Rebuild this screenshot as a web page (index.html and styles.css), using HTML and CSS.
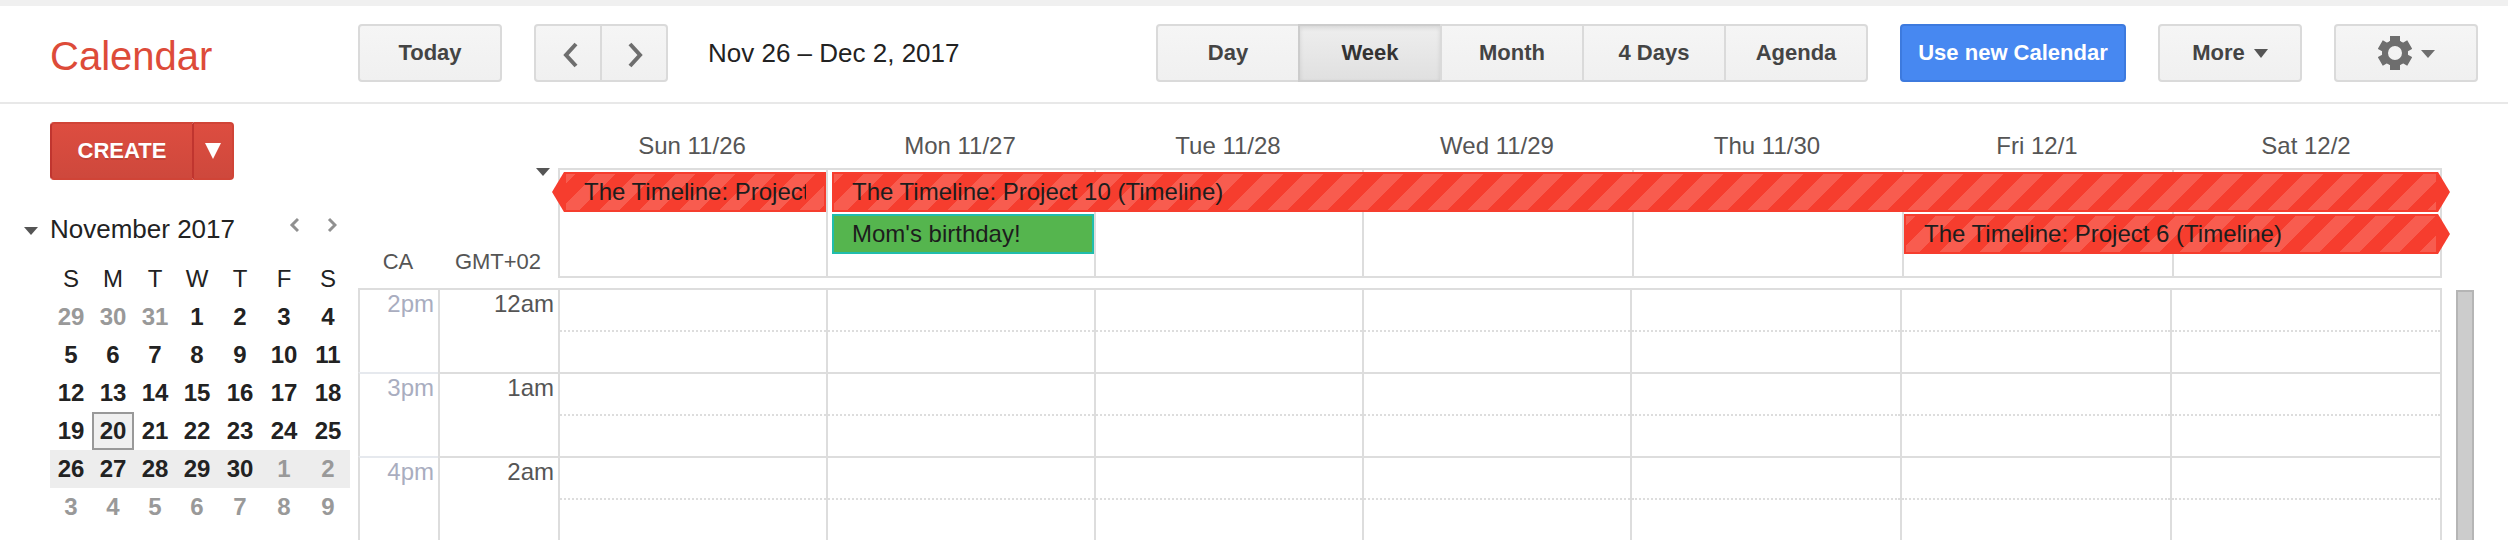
FILE: index.html
```html
<!DOCTYPE html>
<html lang="en">
<head>
<meta charset="utf-8">
<title>Calendar</title>
<link rel="stylesheet" href="styles.css">
</head>
<body>
<header class="topbar">
  <h1 class="logo">Calendar</h1>
  <button class="btn" type="button">Today</button>
  <div class="btn-group pager">
    <button class="btn" type="button" aria-label="Previous week"><svg width="20" height="30" viewBox="0 0 20 30"><path d="M18 6 8 17l10 11" fill="none" stroke="#6e6e6e" stroke-width="4"/></svg></button>
    <button class="btn" type="button" aria-label="Next week"><svg width="20" height="30" viewBox="0 0 20 30"><path d="M6 6l10 11L6 28" fill="none" stroke="#6e6e6e" stroke-width="4"/></svg></button>
  </div>
  <h2 class="range">Nov 26 – Dec 2, 2017</h2>
  <div class="actions">
    <div class="btn-group">
      <button class="btn" type="button">Day</button>
      <button class="btn btn-active" type="button" aria-pressed="true">Week</button>
      <button class="btn" type="button">Month</button>
      <button class="btn" type="button">4 Days</button>
      <button class="btn" type="button">Agenda</button>
    </div>
    <button class="btn btn-primary" type="button">Use new Calendar</button>
    <button class="btn btn-menu" type="button">More <svg width="14" height="9" viewBox="0 0 14 9"><path d="M0 0h14L7 9z" fill="#555"/></svg></button>
    <button class="btn btn-menu" type="button" aria-label="Settings"><svg width="34" height="34" viewBox="-17 -17 34 34"><circle r="10" fill="none" stroke="#6e6e6e" stroke-width="6"/><g fill="#6e6e6e"><path id="tooth" d="M-5-17H5V-12L7-10H-7L-5-12z"/><use href="#tooth" transform="rotate(60)"/><use href="#tooth" transform="rotate(120)"/><use href="#tooth" transform="rotate(180)"/><use href="#tooth" transform="rotate(240)"/><use href="#tooth" transform="rotate(300)"/></g></svg><svg width="14" height="9" viewBox="0 0 14 9"><path d="M0 1h14L7 9z" fill="#6e6e6e"/></svg></button>
  </div>
</header>

<div class="layout">
  <aside class="sidebar">
    <div class="create">
      <button class="create-main" type="button">CREATE</button>
      <button class="create-more" type="button" aria-label="Quick add"><svg width="16" height="16" viewBox="0 0 16 16"><path d="M0 0h16L8 16z" fill="#fff"/></svg></button>
    </div>
    <div class="month-head">
      <button class="icon-btn toggle" type="button" aria-label="Collapse month"><svg width="16" height="10" viewBox="0 0 16 10"><path d="M1 1h14L8 9z" fill="#555"/></svg></button>
      <h3 class="month-title">November 2017</h3>
      <div class="month-nav">
        <button class="icon-btn" type="button" aria-label="Previous month"><svg width="12" height="16" viewBox="0 0 12 16"><path d="M11 2 5 8l6 6" fill="none" stroke="#909090" stroke-width="3"/></svg></button>
        <button class="icon-btn" type="button" aria-label="Next month"><svg width="12" height="16" viewBox="0 0 12 16"><path d="M4 2l6 6-6 6" fill="none" stroke="#909090" stroke-width="3"/></svg></button>
      </div>
    </div>
    <table class="month">
      <colgroup><col span="4" class="col-narrow"><col span="3" class="col-wide"></colgroup>
      <thead><tr><th>S</th><th>M</th><th>T</th><th>W</th><th>T</th><th>F</th><th>S</th></tr></thead>
      <tbody>
        <tr><td class="other">29</td><td class="other">30</td><td class="other">31</td><td>1</td><td>2</td><td>3</td><td>4</td></tr>
        <tr><td>5</td><td>6</td><td>7</td><td>8</td><td>9</td><td>10</td><td>11</td></tr>
        <tr><td>12</td><td>13</td><td>14</td><td>15</td><td>16</td><td>17</td><td>18</td></tr>
        <tr><td>19</td><td class="today">20</td><td>21</td><td>22</td><td>23</td><td>24</td><td>25</td></tr>
        <tr class="shown"><td>26</td><td>27</td><td>28</td><td>29</td><td>30</td><td class="other">1</td><td class="other">2</td></tr>
        <tr><td class="other">3</td><td class="other">4</td><td class="other">5</td><td class="other">6</td><td class="other">7</td><td class="other">8</td><td class="other">9</td></tr>
      </tbody>
    </table>
  </aside>

  <main class="week">
    <div class="week-head">
      <div class="gutter">
        <button class="icon-btn allday-toggle" type="button" aria-label="Collapse all-day events"><svg width="14" height="8" viewBox="0 0 14 8"><path d="M0 0h14L7 8z" fill="#555"/></svg></button>
        <div class="zones"><span>CA</span><span>GMT+02</span></div>
      </div>
      <div class="days-wrap">
        <div class="day-names">
          <span>Sun 11/26</span><span>Mon 11/27</span><span>Tue 11/28</span><span>Wed 11/29</span><span>Thu 11/30</span><span>Fri 12/1</span><span>Sat 12/2</span>
        </div>
        <div class="allday">
          <div class="lane lane-1"></div><div class="lane lane-2"></div><div class="lane lane-3"></div><div class="lane lane-4"></div><div class="lane lane-5"></div><div class="lane lane-6"></div><div class="lane lane-7"></div>
          <a href="#" class="event event-red from-before ev-sun"><span class="event-body"><span class="event-text">The Timeline: Project</span></span></a>
          <a href="#" class="event event-red to-after ev-mon"><span class="event-body"><span class="event-text">The Timeline: Project 10 (Timeline)</span></span></a>
          <a href="#" class="event event-green ev-birthday"><span class="event-body"><span class="event-text">Mom's birthday!</span></span></a>
          <a href="#" class="event event-red to-after ev-fri"><span class="event-body"><span class="event-text">The Timeline: Project 6 (Timeline)</span></span></a>
        </div>
      </div>
    </div>

    <div class="week-body">
      <div class="hours">
        <div class="hour"><span class="time time-alt">2pm</span><span class="time">12am</span><i class="slot"></i><i class="slot"></i><i class="slot"></i><i class="slot"></i><i class="slot"></i><i class="slot"></i><i class="slot"></i></div>
        <div class="hour"><span class="time time-alt">3pm</span><span class="time">1am</span><i class="slot"></i><i class="slot"></i><i class="slot"></i><i class="slot"></i><i class="slot"></i><i class="slot"></i><i class="slot"></i></div>
        <div class="hour"><span class="time time-alt">4pm</span><span class="time">2am</span><i class="slot"></i><i class="slot"></i><i class="slot"></i><i class="slot"></i><i class="slot"></i><i class="slot"></i><i class="slot"></i></div>
      </div>
      <div class="scroll-thumb"></div>
    </div>
  </main>
</div>
</body>
</html>
```
FILE: styles.css
```css
*,
*::before {
  box-sizing: border-box;
}

body {
  margin: 0;
  background: #fff;
  color: #222;
  font: 24px/28px "Liberation Sans", Arial, sans-serif;
}

h1, h2, h3 {
  margin: 0;
  font-weight: normal;
  white-space: nowrap;
}

button {
  margin: 0;
  padding: 0;
  font-family: inherit;
  cursor: pointer;
}

/* Top bar */
.topbar {
  display: flex;
  align-items: center;
  padding: 18px 30px 20px 0;
  border-top: 6px solid #f0f0f0;
  border-bottom: 2px solid #e8e8e8;
}

.logo {
  width: 358px;
  padding: 6px 0 0 50px;
  color: #dd4b39;
  font-size: 40px;
  line-height: 48px;
}

.btn {
  display: inline-flex;
  align-items: center;
  justify-content: center;
  width: 144px;
  height: 58px;
  border: 2px solid #dadada;
  border-radius: 4px;
  background: linear-gradient(#f5f5f5, #f0f0f0);
  color: #444;
  font-size: 22px;
  font-weight: bold;
  line-height: 28px;
  white-space: nowrap;
}

.btn-group {
  display: flex;
}

.btn-group .btn {
  border-radius: 0;
}

.btn-group .btn + .btn {
  margin-left: -2px;
}

.btn-group .btn:first-child {
  border-radius: 4px 0 0 4px;
}

.btn-group .btn:last-child {
  border-radius: 0 4px 4px 0;
}

.btn-active {
  border-color: #ccc;
  background: linear-gradient(#eee, #e0e0e0);
  box-shadow: inset 0 2px 4px rgba(0, 0, 0, 0.1);
  color: #333;
}

.pager {
  margin: 0 40px 0 32px;
}

.pager .btn {
  width: 68px;
}

.range {
  font-size: 26px;
  line-height: 32px;
}

.actions {
  display: flex;
  gap: 32px;
  margin-left: auto;
}

.btn-primary {
  width: 226px;
  border-color: #3d7ade;
  background: #4788f1;
  color: #fff;
}

.btn-menu {
  gap: 9px;
}

/* Sidebar */
.layout {
  display: flex;
}

.sidebar {
  flex: none;
  width: 358px;
  padding: 18px 8px 0 50px;
}

.create {
  display: inline-flex;
  vertical-align: top;
  height: 58px;
}

.create-main,
.create-more {
  display: flex;
  align-items: center;
  justify-content: center;
  border: 2px solid #d04437;
  background: linear-gradient(#dd4d40, #ce483c);
  color: #fff;
  font-size: 22px;
  font-weight: bold;
  text-shadow: 0 2px rgba(0, 0, 0, 0.1);
}

.create-main {
  width: 144px;
  border-left-color: #c0352f;
  border-right-color: #c0352f;
  border-radius: 4px 0 0 4px;
}

.create-more {
  width: 40px;
  border-left: 0;
  border-radius: 0 4px 4px 0;
}

.icon-btn {
  display: flex;
  align-items: center;
  justify-content: center;
  border: 0;
  background: none;
}

.month-head {
  display: flex;
  align-items: center;
  height: 34px;
  margin: 32px 0 14px -27px;
}

.toggle {
  justify-content: flex-start;
  width: 27px;
  height: 34px;
  padding-top: 4px;
}

.month-title {
  font-size: 26px;
  line-height: 34px;
}

.month-nav {
  display: flex;
  align-self: flex-start;
  margin-left: auto;
}

.month-nav .icon-btn {
  width: 38px;
  height: 26px;
}

.month {
  width: 300px;
  table-layout: fixed;
  border-collapse: separate;
  border-spacing: 0;
  text-align: center;
}

.col-narrow {
  width: 42px;
}

.col-wide {
  width: 44px;
}

.month th,
.month td {
  height: 38px;
  padding: 0;
  font-weight: normal;
}

.month td {
  font-weight: bold;
}

.month .other {
  color: #999;
}

.month .shown {
  background: #ededed;
}

.month .today {
  border: 2px solid #999;
  background: #f0f0f0;
}

/* Week view */
.week {
  flex: 1;
  min-width: 0;
  padding: 28px 34px 0 0;
}

.week-head {
  display: flex;
  margin: 0 32px 10px 0;
}

.gutter {
  display: flex;
  flex-direction: column;
  justify-content: space-between;
  align-items: flex-end;
  flex: none;
  width: 200px;
  padding-top: 36px;
}

.allday-toggle {
  margin-right: 8px;
}

.zones {
  display: grid;
  grid-template-columns: 80px 120px;
  padding-bottom: 2px;
  color: #555;
  font-size: 22px;
  text-align: center;
}

.days-wrap {
  flex: 1;
  min-width: 0;
}

.day-names,
.allday {
  display: grid;
  grid-template-columns: repeat(3, 268fr) repeat(3, 270fr) 268fr;
}

.day-names {
  padding: 0 2px 8px 0;
  color: #555;
  text-align: center;
}

.allday {
  grid-template-rows: 2px 40px 2px 40px 22px;
  border: 2px solid #ddd;
  border-left: 0;
}

.lane {
  grid-row: 1 / -1;
  border-left: 2px solid #ddd;
}

.lane-1 { grid-column: 1; }
.lane-2 { grid-column: 2; }
.lane-3 { grid-column: 3; }
.lane-4 { grid-column: 4; }
.lane-5 { grid-column: 5; }
.lane-6 { grid-column: 6; }
.lane-7 { grid-column: 7; }

.event {
  z-index: 1;
  min-width: 0;
  padding: 2px;
  color: #1d1d1d;
  text-decoration: none;
}

.event-body {
  display: block;
  height: 36px;
  padding: 0 18px;
}

.event-text {
  display: block;
  overflow: hidden;
  line-height: 36px;
  white-space: nowrap;
}

.event-red {
  background: #f63d2e;
}

.event-red .event-body {
  background: linear-gradient(135deg, #f85c4f 25%, transparent 25% 50%, #f85c4f 50% 75%, transparent 75%) -10px 0 / 40px 40px;
}

.event-green {
  border: 2px solid #20bdac;
  padding: 0;
  background: #55b54e;
}

.from-before {
  padding-left: 14px;
  clip-path: polygon(12px 0, 100% 0, 100% 100%, 12px 100%, 0 50%);
}

.to-after {
  padding-right: 14px;
  clip-path: polygon(0 0, calc(100% - 12px) 0, 100% 50%, calc(100% - 12px) 100%, 0 100%);
}

.ev-sun {
  grid-area: 2 / 1 / 3 / 2;
  margin-left: -6px;
}

.ev-mon {
  grid-area: 2 / 2 / 3 / 8;
  margin: 0 -10px 0 6px;
}

.ev-birthday {
  grid-area: 4 / 2 / 5 / 3;
  margin-left: 6px;
}

.ev-fri {
  grid-area: 4 / 6 / 5 / 8;
  margin: 0 -10px 0 2px;
}

.week-body {
  display: flex;
  gap: 14px;
}

.hours {
  flex: 1;
  border-right: 2px solid #ddd;
}

.hour {
  display: grid;
  grid-template-columns: 80px 120px repeat(4, 268fr) repeat(3, 270fr);
  height: 84px;
}

.time,
.slot {
  border-top: 2px solid #ddd;
  border-left: 2px solid #ddd;
}

.time {
  padding-right: 4px;
  color: #555;
  text-align: right;
}

.time-alt {
  color: #a9adbf;
}

.hour + .hour .time-alt {
  border-top-color: #e6e9ee;
}

.slot::before {
  content: "";
  display: block;
  height: 42px;
  border-bottom: 2px dotted #ddd;
}

.scroll-thumb {
  width: 18px;
  margin-top: 2px;
  border: 2px solid #b5b5b5;
  border-bottom: 0;
  background: #ccc;
}
```
